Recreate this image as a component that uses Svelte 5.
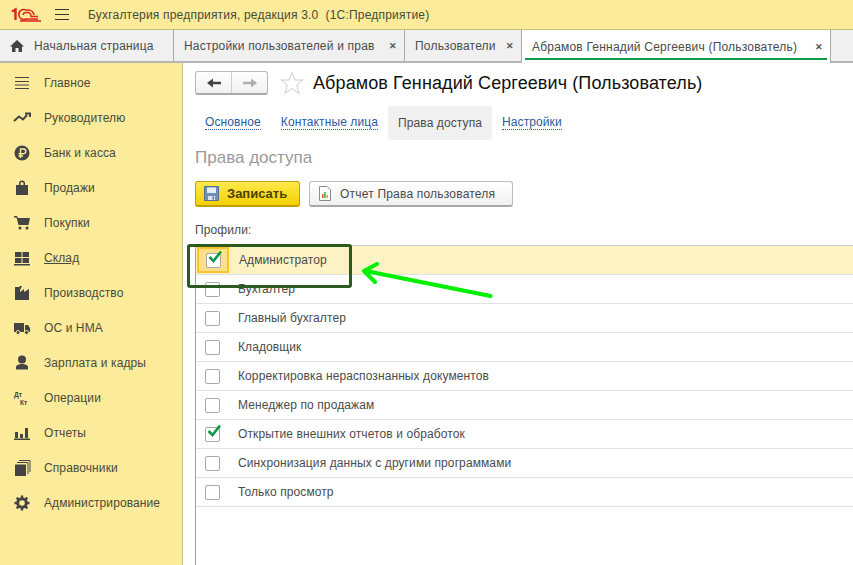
<script>
  const nav = [
    ['Главное','menu'],['Руководителю','trend'],['Банк и касса','rub'],['Продажи','bag'],['Покупки','cart'],['Склад','stock'],['Производство','factory'],['ОС и НМА','truck'],['Зарплата и кадры','person'],['Операции','dtkt'],['Отчеты','bars'],['Справочники','books'],['Администрирование','gear']
  ];
  const profiles = [
    ['Администратор',true,true],['Бухгалтер',false,false],['Главный бухгалтер',false,false],['Кладовщик',false,false],['Корректировка нераспознанных документов',false,false],['Менеджер по продажам',false,false],['Открытие внешних отчетов и обработок',true,false],['Синхронизация данных с другими программами',false,false],['Только просмотр',false,false]
  ];
</script>

<div class="app">
  <header class="top">
    <svg class="logo" width="30" height="16" viewBox="0 0 30 16" fill="none" stroke="#d9251c">
      <path d="M1 4.5 L4.5 2.5 V13" stroke-width="2.4"/>
      <path d="M27 12 H15 A5 5 0 1 1 15 3 H17 A6 6 0 0 1 23 8" stroke-width="1.6"/>
      <path d="M12 8 A3 3 0 0 1 15 5.5 H17 A3.500 3.500 0 0 1 20 9.500 H27" stroke-width="1.5"/>
      <path d="M9 14 H30" stroke-width="1.5"/>
    </svg>
    <svg class="burger" width="16" height="12" viewBox="0 0 16 12" stroke="#333" stroke-width="1"><path d="M1 .5H15M1 5.500H15M1 10.500H15"/></svg>
    <span class="apptitle">Бухгалтерия предприятия, редакция 3.0&nbsp; (1С:Предприятие)</span>
  </header>

  <div class="tabs">
    <div class="tab home">
      <svg width="16" height="14" viewBox="0 0 16 14" fill="#444"><path d="M8 1 L15 7.500 H13 V13 H9.500 V9 H6.500 V13 H3 V7.500 H1Z"/></svg>
      <span>Начальная страница</span>
    </div>
    <div class="tab t2"><span>Настройки пользователей и прав</span><b class="x">✕</b></div>
    <div class="tab t3"><span>Пользователи</span><b class="x">✕</b></div>
    <div class="tab active"><span>Абрамов Геннадий Сергеевич (Пользователь)</span><b class="x">✕</b></div>
  </div>

  <div class="body">
    <aside class="side">
      {#each nav as [label, ic]}
        <div class="navrow">
          <svg class="nicon" width="18" height="18" viewBox="0 0 18 18" fill="#444" stroke="none">
            {#if ic==='menu'}
              <path d="M2 3.500H16M2 7.500H16M2 11H16M2 14.500H16" stroke="#444" stroke-width="1"/>
            {:else if ic==='trend'}
              <path d="M1 12 L6 7.500 L10 10.500 L14 6 M12 4.500 H17 V8" fill="none" stroke="#444" stroke-width="2"/>
            {:else if ic==='rub'}
              <circle cx="9" cy="9" r="7.500"/><path d="M7.500 14V5H10.500A2.300 2.300 0 0 1 10.500 9.700H5.500M5.500 12H10" fill="none" stroke="#fbeb9b" stroke-width="1.400"/>
            {:else if ic==='bag'}
              <path d="M3 6H6V4.500A3 3 0 0 1 12 4.500V6H15V16H3Z"/><path d="M7.500 6V4.500A1.500 1.500 0 0 1 10.500 4.500V6Z" fill="#fbeb9b"/>
            {:else if ic==='cart'}
              <path d="M1 2H4L5 4H17L15.500 11H5.500L3.500 3.500H1Z"/><circle cx="7" cy="14" r="1.500"/><circle cx="14" cy="14" r="1.500"/>
            {:else if ic==='stock'}
              <path d="M2 3H8.500V8H2ZM9.500 3H16V8H9.500ZM2 9H8.500V14H2ZM9.500 9H16V14H9.500ZM1 15H17V16.500H1Z"/>
            {:else if ic==='factory'}
              <path d="M2 16V3H6L7 2L9 2L7 6V8L11 5V8L16 5V16Z"/>
            {:else if ic==='truck'}
              <path d="M1 4H11V13H1ZM12 6H15L17 9V13H12Z"/><circle cx="5" cy="13.500" r="2" stroke="#fbeb9b"/><circle cx="13.500" cy="13.500" r="2" stroke="#fbeb9b"/>
            {:else if ic==='person'}
              <circle cx="9" cy="5.500" r="4"/><path d="M3 15.500V13C3 11 6 10 9 10S15 11 15 13V15.500Z"/>
            {:else if ic==='dtkt'}
              <text x="1" y="8" class="dk">Дт</text><text x="7" y="15.500" class="dk">Кт</text>
            {:else if ic==='bars'}
              <path d="M2 8H5V14H2ZM7 10H10V14H7ZM12 4H15V14H12ZM1 14.500H17V16H1Z"/>
            {:else if ic==='books'}
              <path d="M2 5.500H13V17H2Z"/><path d="M4 3.500H15V15M6 1.500H17V13" fill="none" stroke="#444" stroke-width="1"/>
            {:else if ic==='gear'}
              <circle cx="9" cy="9" r="4.300" fill="none" stroke="#444" stroke-width="3"/>
              <path d="M9 1.500V16.500M1.500 9H16.500M3.700 3.700L14.300 14.300M14.300 3.700L3.700 14.300" stroke="#444" stroke-width="2.400" stroke-dasharray="3 9"/>
            {/if}
          </svg>
          <span class:under={label==='Склад'}>{label}</span>
        </div>
      {/each}
    </aside>

    <main class="main">
      <div class="titlebar">
        <div class="navbtns">
          <span class="nb"><svg width="16" height="12" viewBox="0 0 16 12" fill="#444"><path d="M1 6L7 1.500V4.800H15V7.200H7V10.500Z"/></svg></span>
          <span class="nb nb2"><svg width="16" height="12" viewBox="0 0 16 12" fill="#b0b0b0"><path d="M15 6L9 1.500V4.800H1V7.200H9V10.500Z"/></svg></span>
        </div>
        <svg class="star" width="24" height="24" viewBox="0 0 24 24" fill="#fff" stroke="#ccc" stroke-width="1"><path d="M12 1.500L15 9H23L16.800 14L19 22.500L12 17.500L5 22.500L7.200 14L1 9H9Z"/></svg>
        <h1>Абрамов Геннадий Сергеевич (Пользователь)</h1>
      </div>

      <div class="pages">
        <span class="lnk">Основное</span>
        <span class="lnk">Контактные лица</span>
        <span class="cur">Права доступа</span>
        <span class="lnk">Настройки</span>
      </div>

      <h2>Права доступа</h2>

      <div class="actions">
        <button class="save">
          <svg width="15" height="15" viewBox="0 0 15 15"><path d="M0.500 0.500H14.500V14.500H0.500Z" fill="#6f8fb5" stroke="#5a6f8a"/><path d="M3 1.500H12V7H3Z" fill="#e8eef5"/><path d="M4 10H11V14H4Z" fill="#dfe5ec"/><path d="M8.500 10.500H10V13.500H8.500Z" fill="#5a6f8a"/></svg>
          Записать
        </button>
        <button class="report">
          <svg width="13" height="15" viewBox="0 0 13 15"><path d="M1.500 .5H9L12.500 4V14.500H1.500Z" fill="#fff" stroke="#8a8a8a"/><path d="M4 8H5.500V12H4Z" fill="#d44"/><path d="M6.200 6H7.700V12H6.200Z" fill="#3a3"/><path d="M8.400 9H9.900V12H8.400Z" fill="#d9a520"/></svg>
          Отчет Права пользователя
        </button>
      </div>

      <div class="plabel">Профили:</div>

      <div class="grid">
        {#each profiles as [name, on, sel]}
          <div class="row" class:sel>
            <span class="cbcell">
              <span class="cb">
                {#if on}<svg class="chk" width="16" height="14" viewBox="0 0 16 14" fill="none" stroke="#0d9a49" stroke-width="2.600"><path d="M2.500 7L6.500 11L14 1.500"/></svg>{/if}
              </span>
            </span>
            <span class="nm">{name}</span>
          </div>
        {/each}
      </div>
    </main>
  </div>

  <div class="callout"></div>
  <svg class="arrow" width="140" height="40" viewBox="0 0 140 40" fill="none" stroke="#00f000" stroke-width="4" stroke-linecap="round" stroke-linejoin="round">
    <path d="M130.500 34 L6 9 M17 2 L4 9 L15 20"/>
  </svg>
</div>

<style>
  :global(body){margin:0;background:#fff;}
  .app{position:relative;width:853px;height:565px;overflow:hidden;font-family:"Liberation Sans",Arial,sans-serif;font-size:12px;color:#4b4b4b;background:#fff;}
  .top{height:29px;background:#fbeb9b;border-bottom:1px solid #c9bd7f;display:flex;align-items:center;box-sizing:content-box;}
  .logo{margin-left:11px;}
  .burger{margin-left:13px;}
  .apptitle{margin-left:18px;letter-spacing:.2px;color:#4a4a3a;}
  .tabs{height:31px;background:#f0f0f0;border-bottom:2px solid #b5b5b5;display:flex;}
  .tab{display:flex;align-items:center;border-right:1px solid #a8a8a8;white-space:nowrap;letter-spacing:.2px;box-sizing:border-box;height:31px;}
  .home{width:174px;padding-left:9px;}
  .home span{margin-left:9px;}
  .t2{width:231px;padding-left:10px;}
  .t3{width:117px;padding-left:10px;}
  .active{width:309px;padding-left:10px;background:#fff;position:relative;height:33px;border-bottom:none;}
  .active::after{content:"";position:absolute;left:3px;right:3px;bottom:3px;height:2px;background:#0d9a49;}
  .x{font-size:9px;font-weight:700;color:#555;margin-left:8px;letter-spacing:0;}
  .t2 .x,.t3 .x,.active .x{margin-left:auto;margin-right:7px;}
  .body{display:flex;height:503px;}
  .side{width:182px;background:#fbeb9b;border-right:1px solid #c9bd7f;padding-top:2px;flex:none;}
  .navrow{height:35px;display:flex;align-items:center;padding-left:13px;letter-spacing:.1px;color:#4a4a3a;}
  .navrow span{margin-left:13px;}
  .under{text-decoration:underline;}
  .nicon{flex:none;}
  .dk{font-size:6.500px;font-weight:700;font-family:"Liberation Sans",sans-serif;}
  .main{flex:1;padding-left:12px;min-width:0;}
  .titlebar{display:flex;align-items:center;height:24px;margin-top:8px;}
  .navbtns{display:flex;width:73px;height:24px;box-sizing:border-box;border:1px solid #b8b8b8;border-bottom:2px solid #a8a8a8;border-radius:3px;background:linear-gradient(#fff,#f1f1f1);}
  .nb{flex:1;display:flex;align-items:center;justify-content:center;}
  .nb2{border-left:1px solid #d0d0d0;}
  .star{margin-left:12px;flex:none;}
  h1{margin:0 0 0 9px;font-size:18px;font-weight:400;color:#111;white-space:nowrap;letter-spacing:.1px;}
  .pages{display:flex;align-items:center;height:34px;margin-top:11px;margin-left:0;}
  .lnk{color:#2b5a9e;border-bottom:1px dotted #2b5a9e;line-height:13px;letter-spacing:.1px;margin-left:10px;margin-right:10px;}
  .cur{background:#f0f0f0;border-radius:3px;height:34px;line-height:34px;padding:0 10px;letter-spacing:.1px;}
  .cur + .lnk{margin-left:10px;}
  h2{margin:8px 0 0;font-size:17px;line-height:20px;font-weight:400;color:#9a9a9a;}
  .actions{display:flex;gap:9px;margin-top:13px;}
  button{font-family:inherit;height:26px;box-sizing:border-box;border-radius:3px;display:flex;align-items:center;padding:0;margin:0;}
  .save{width:105px;background:linear-gradient(#ffe94d,#f5d000);border:1px solid #c0a000;border-bottom-width:2px;font-weight:700;font-size:13px;color:#4d4300;padding-left:8px;gap:8px;}
  .report{width:204px;background:linear-gradient(#fff,#f0f0f0);border:1px solid #bdbdbd;border-bottom:2px solid #a8a8a8;font-size:12px;letter-spacing:.2px;color:#4b4b4b;padding-left:8px;gap:9px;}
  .plabel{margin-top:15px;height:16px;line-height:16px;letter-spacing:.1px;}
  .grid{margin-top:7px;border-left:1px solid #a0a0a0;border-top:1px solid #c8c8c8;height:400px;}
  .row{height:29px;box-sizing:border-box;border-bottom:1px solid #e2e2e2;display:flex;align-items:center;letter-spacing:.1px;}
  .sel{background:#fdf2c4;}
  .cbcell{width:33px;height:28px;box-sizing:border-box;display:flex;align-items:center;padding-left:9px;flex:none;}
  .sel .cbcell{background:#fde08a;border:2px solid #fbc22e;padding-left:7px;width:32px;margin-left:1px;margin-right:1px;height:26px;}
  .cb{width:15px;height:15px;box-sizing:border-box;border:1px solid #a9a9a9;border-radius:2px;background:#fff;position:relative;display:block;}
  .chk{position:absolute;left:0;top:-4px;}
  .nm{margin-left:9px;color:#4b4b4b;}
  .callout{position:absolute;left:187px;top:244px;width:165px;height:44px;box-sizing:border-box;border:3px solid #2d5a1f;border-radius:3px;}
  .arrow{position:absolute;left:360px;top:262px;}
</style>
